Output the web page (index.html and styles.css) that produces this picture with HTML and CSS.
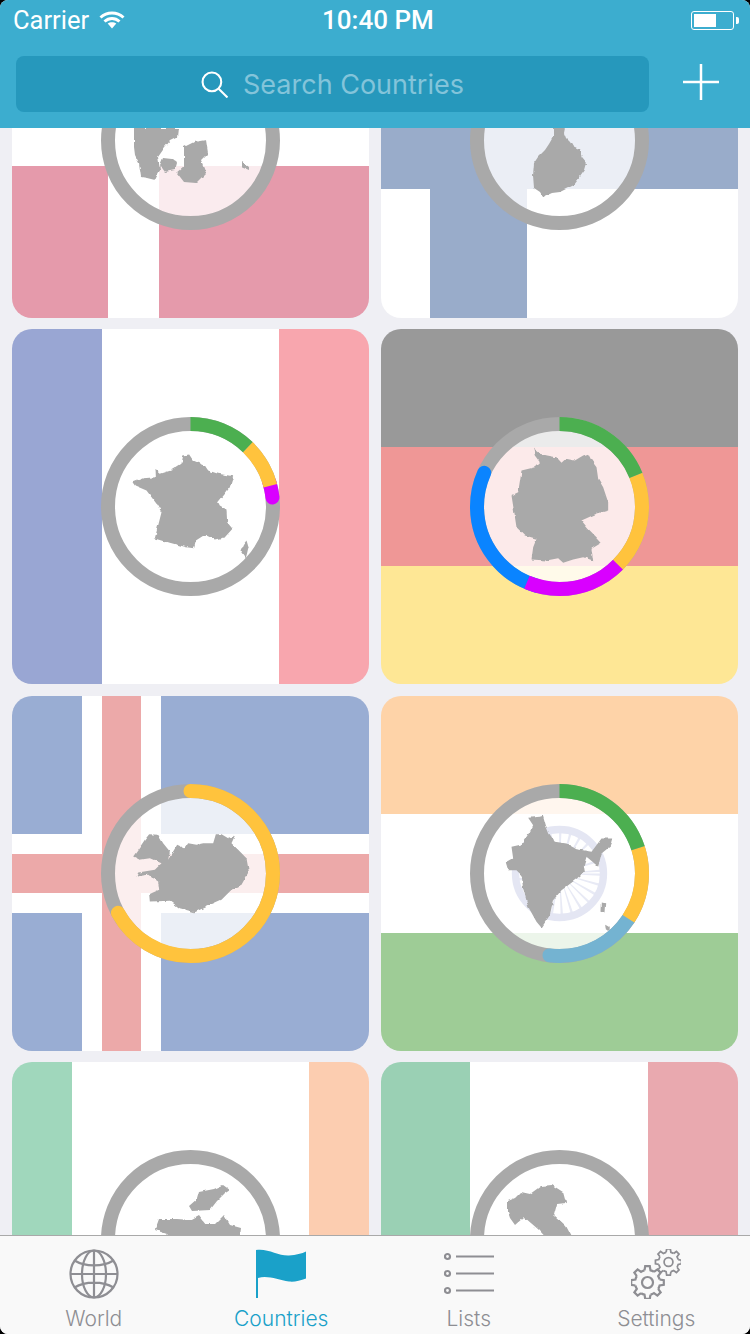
FILE: index.html
```html
<!DOCTYPE html>
<html lang="en">
<head>
    <meta charset="UTF-8">
    <title>Countries</title>
    <link rel="stylesheet" href="styles.css">
</head>
<body>
<svg class="defs" width="0" height="0">
    <!-- roughens the country outlines so they read as coastlines -->
    <filter id="coast" color-interpolation-filters="sRGB">
        <feTurbulence type="fractalNoise" baseFrequency=".05" numOctaves="2" seed="4" />
        <feDisplacementMap in="SourceGraphic" scale="10" xChannelSelector="R" yChannelSelector="G" />
    </filter>
</svg>
<div class="screen">
    <header class="top">
        <div class="status">
            <div class="status-left">
                <span>Carrier</span>
                <svg class="wifi" viewBox="0 0 26 18">
                    <path d="M1.5 6.5C8 .5 18 .5 24.500 6.500" />
                    <path d="M5.500 10.500C10 6.500 16 6.500 20.500 10.500" />
                    <path class="wifi-dot" d="M8.700 12.500C11 10.800 15 10.800 17.300 12.500L13 17.500Z" />
                </svg>
            </div>
            <span class="time">10:40 PM</span>
            <div class="battery"><div class="battery-body"><div class="battery-level"></div></div><div class="battery-nub"></div></div>
        </div>
        <div class="search-row">
            <div class="search">
                <svg class="search-icon" viewBox="0 0 26 26">
                    <circle cx="10.500" cy="10.500" r="9" />
                    <path d="M17 17L25.500 25.500" />
                </svg>
                <span>Search Countries</span>
            </div>
            <div class="add">
                <svg viewBox="0 0 36 36"><path d="M18 0V36M0 18H36" /></svg>
            </div>
        </div>
    </header>

    <main class="list">
        <div class="grid">
            <div class="card flag-dk">
                <svg class="ring" viewBox="0 0 537 537">
                    <circle class="disc" cx="268.500" cy="268.500" r="230" />
                    <g class="map"><g transform="scale(3) translate(-101 -51)">
                        <path d="M134 128L179 128L178 137L170 141L165 147L158 157L160 170L155 180L147 178L141 177L139 163L135 155L134 147Z" />
                        <path d="M163 158L172 159L177 163L175 170L165 172L160 165Z" />
                        <path d="M184 147L194 142L206 140L208 153L201 160L206 173L196 183L184 182L177 173L184 167L184 157Z" />
                        <path d="M242 162L249 167L249 170L242 167Z" />
                    </g></g>
                    <g class="arcs">
                        <circle class="track" cx="268.500" cy="268.500" r="247.500" pathLength="100" />
                    </g>
                </svg>
            </div>
            <div class="card flag-fi">
                <svg class="ring" viewBox="0 0 537 537">
                    <circle class="disc" cx="268.500" cy="268.500" r="230" />
                    <g class="map"><g transform="scale(3) translate(-470 -51)">
                        <path d="M553 128L565 128L564 133L566 138L570 142L573 147L579 150L582 157L587 163L585 170L580 177L574 185L568 188L560 192L552 193L543 197L540 192L534 188L533 175L534 163L538 157L545 150L549 144L553 137Z" />
                    </g></g>
                    <g class="arcs">
                        <circle class="track" cx="268.500" cy="268.500" r="247.500" pathLength="100" />
                    </g>
                </svg>
            </div>

            <div class="card flag-fr">
                <svg class="ring" viewBox="0 0 537 537">
                    <circle class="disc" cx="268.500" cy="268.500" r="230" />
                    <g class="map"><g transform="translate(-33.500 -34.500)">
                        <path d="M128 230L160 218L198 215L197 190L212 205L243 195L275 175L280 150L298 147L310 165L345 180L355 195L385 205L430 212L420 245L408 262L385 290L390 300L410 312L412 350L428 370L405 395L375 402L345 388L318 405L312 428L290 425L240 412L195 398L205 360L215 320L200 295L170 255L135 240Z" />
                        <path d="M470 405L476 425L468 458L452 435L460 418Z" />
                    </g></g>
                    <g class="arcs">
                        <circle class="track" cx="268.500" cy="268.500" r="247.500" pathLength="100" />
                        <circle class="arc purple cap" cx="268.500" cy="268.500" r="247.500" pathLength="100" stroke-dasharray="3 97" stroke-dashoffset="-20.200" />
                        <circle class="arc yellow" cx="268.500" cy="268.500" r="247.500" pathLength="100" stroke-dasharray="8.700 91.300" stroke-dashoffset="-12.200" />
                        <circle class="arc green" cx="268.500" cy="268.500" r="247.500" pathLength="100" stroke-dasharray="12.200 87.800" />
                    </g>
                </svg>
            </div>
            <div class="card flag-de">
                <svg class="ring" viewBox="0 0 537 537">
                    <circle class="disc" cx="268.500" cy="268.500" r="230" />
                    <g class="map"><g transform="translate(-30.500 -34.500)">
                        <path d="M220 130L240 145L262 150L290 155L305 172L318 160L345 165L370 150L385 145L395 165L410 185L415 220L430 245L445 290L445 315L410 325L365 345L385 370L410 395L425 412L395 430L400 465L370 455L340 462L310 472L295 458L260 465L215 462L220 425L230 400L195 390L170 365L163 320L155 270L175 260L185 195L225 185L240 170L225 150Z" />
                    </g></g>
                    <g class="arcs">
                        <circle class="track" cx="268.500" cy="268.500" r="247.500" pathLength="100" />
                        <circle class="arc blue cap" cx="268.500" cy="268.500" r="247.500" pathLength="100" stroke-dasharray="27.200 72.800" stroke-dashoffset="-54.400" />
                        <circle class="arc purple" cx="268.500" cy="268.500" r="247.500" pathLength="100" stroke-dasharray="19 81" stroke-dashoffset="-37.400" />
                        <circle class="arc yellow" cx="268.500" cy="268.500" r="247.500" pathLength="100" stroke-dasharray="18.600 81.400" stroke-dashoffset="-18.800" />
                        <circle class="arc green" cx="268.500" cy="268.500" r="247.500" pathLength="100" stroke-dasharray="18.800 81.200" />
                    </g>
                </svg>
            </div>

            <div class="card flag-is">
                <svg class="ring" viewBox="0 0 537 537">
                    <circle class="disc" cx="268.500" cy="268.500" r="230" />
                    <g class="map"><g transform="translate(-33.500 -27.500)">
                        <path d="M130 245L155 210L165 195L178 178L205 180L220 205L240 230L235 255L262 210L285 220L295 205L320 210L340 205L370 205L378 178L395 178L415 190L435 183L425 205L445 225L470 250L477 290L455 330L425 345L395 375L350 395L315 412L270 400L240 378L180 380L178 358L208 345L205 320L175 300L140 305L145 293L195 285L215 265L180 250L150 255Z" />
                    </g></g>
                    <g class="arcs">
                        <circle class="track" cx="268.500" cy="268.500" r="247.500" pathLength="100" />
                        <circle class="arc yellow cap" cx="268.500" cy="268.500" r="247.500" pathLength="100" stroke-dasharray="67 33" />
                    </g>
                </svg>
            </div>
            <div class="card flag-in">
                <svg class="ring" viewBox="0 0 537 537">
                    <circle class="disc" cx="268.500" cy="268.500" r="230" />
                    <circle class="chakra-spokes" cx="268.500" cy="268.500" r="85" />
                    <circle class="chakra" cx="268.500" cy="268.500" r="132" />
                    <g class="map"><g transform="translate(-30.500 -26.500)">
                        <path d="M205 128L240 125L250 122L258 150L268 175L285 200L320 205L350 222L370 225L395 230L425 190L460 190L455 210L425 235L415 275L398 260L380 245L372 272L375 290L345 315L305 345L280 375L270 420L245 458L230 440L205 395L190 340L185 300L170 285L145 285L138 262L160 250L155 215L185 208L210 170L220 150Z" />
                        <path d="M426 382L436 384L434 412L425 410Z" />
                        <path d="M436 446L447 452L446 468L438 462Z" />
                    </g></g>
                    <g class="arcs">
                        <circle class="track" cx="268.500" cy="268.500" r="247.500" pathLength="100" />
                        <circle class="arc sky cap" cx="268.500" cy="268.500" r="247.500" pathLength="100" stroke-dasharray="17.700 82.300" stroke-dashoffset="-34.200" />
                        <circle class="arc yellow" cx="268.500" cy="268.500" r="247.500" pathLength="100" stroke-dasharray="14.200 85.800" stroke-dashoffset="-20" />
                        <circle class="arc green" cx="268.500" cy="268.500" r="247.500" pathLength="100" stroke-dasharray="20 80" />
                    </g>
                </svg>
            </div>

            <div class="card flag-ie">
                <svg class="ring" viewBox="0 0 537 537">
                    <circle class="disc" cx="268.500" cy="268.500" r="230" />
                    <g class="map"><g transform="scale(3) translate(-101 -1150)">
                        <path d="M223 1185L230 1190L224 1194L217 1201L210 1210L192 1211L189 1206L197 1199L199 1192L214 1189Z" />
                        <path d="M199 1215L206 1224L215 1224L224 1215L230 1225L241 1228L239 1245L239 1260L160 1260L154 1245L167 1234L155 1230L159 1219L177 1219L190 1220Z" />
                    </g></g>
                    <g class="arcs">
                        <circle class="track" cx="268.500" cy="268.500" r="247.500" pathLength="100" />
                    </g>
                </svg>
            </div>
            <div class="card flag-it">
                <svg class="ring" viewBox="0 0 537 537">
                    <circle class="disc" cx="268.500" cy="268.500" r="230" />
                    <g class="map"><g transform="scale(3) translate(-470 -1150)">
                        <path d="M508 1201L515 1198L521 1192L530 1194L541 1186L552 1185L563 1192L566 1203L557 1204L554 1215L566 1226L574 1241L579 1246L590 1260L570 1260L552 1244L539 1230L524 1217L515 1225L510 1218L508 1212Z" />
                    </g></g>
                    <g class="arcs">
                        <circle class="track" cx="268.500" cy="268.500" r="247.500" pathLength="100" />
                    </g>
                </svg>
            </div>
        </div>
    </main>

    <nav class="tabs">
        <div class="tab">
            <svg class="tab-icon" viewBox="0 0 50 50">
                <circle cx="25" cy="25" r="23.500" />
                <ellipse cx="25" cy="25" rx="12" ry="23.500" />
                <path d="M25 1.500V48.500M1.500 25H48.500M5.500 11.500C16 18 34 18 44.500 11.500M5.500 38.500C16 32 34 32 44.500 38.500" />
            </svg>
            <span>World</span>
        </div>
        <div class="tab active">
            <svg class="tab-icon" viewBox="0 0 50 50">
                <path class="solid" d="M0 1C12-1 22 7 33 6.500C40 6 46 4.500 50 2.500V29.500C44 32 38 33 33 32.500C22 31 12 26 2 29V49H0Z" />
            </svg>
            <span>Countries</span>
        </div>
        <div class="tab">
            <svg class="tab-icon" viewBox="0 0 50 50">
                <circle cx="3.500" cy="7.500" r="2.500" />
                <circle cx="3.500" cy="24.500" r="2.500" />
                <circle cx="3.500" cy="41.500" r="2.500" />
                <path d="M12 7.500H50M12 24.500H50M12 41.500H50" />
            </svg>
            <span>Lists</span>
        </div>
        <div class="tab">
            <svg class="tab-icon" viewBox="0 0 50 50">
                <defs>
                    <g id="gear">
                        <path id="tooth" d="M-3-12.100L-2.300-16.300H2.300L3-12.100A12.500 12.500 0 0 1 6.400-10.700" />
                        <use href="#tooth" transform="rotate(45)" />
                        <use href="#tooth" transform="rotate(90)" />
                        <use href="#tooth" transform="rotate(135)" />
                        <use href="#tooth" transform="rotate(180)" />
                        <use href="#tooth" transform="rotate(225)" />
                        <use href="#tooth" transform="rotate(270)" />
                        <use href="#tooth" transform="rotate(315)" />
                        <circle r="5.500" />
                    </g>
                </defs>
                <use href="#gear" transform="translate(16.500 33.500)" />
                <use href="#gear" transform="translate(37.500 13) scale(.8)" />
            </svg>
            <span>Settings</span>
        </div>
    </nav>
</div>
</body>
</html>
```

FILE: styles.css
```css
html, body {
    margin: 0;
    background: #000;
}

.defs {
    display: block;
    height: 0;
}

.screen {
    width: 750px;
    height: 1334px;
    display: flex;
    flex-direction: column;
    overflow: hidden;
    border-radius: 8px;
    background: #efeff4;
    font-family: 'Inter', 'Liberation Sans', sans-serif;
}

/* Header */
.top {
    background: #3cadcf;
    color: #fff;
    position: relative;
    z-index: 2;
}

.status {
    height: 40px;
    position: relative;
    display: flex;
    align-items: center;
    justify-content: space-between;
    padding: 0 11px 0 13px;
    font-family: 'Roboto', sans-serif;
    font-size: 25.5px;
}

.status-left {
    display: flex;
    align-items: center;
    gap: 10px;
}

.wifi {
    width: 26px;
    height: 18px;
    fill: none;
    stroke: #fff;
    stroke-width: 3;
}

.wifi-dot {
    fill: #fff;
    stroke: none;
}

.time {
    position: absolute;
    left: 322px;
    font-size: 26px;
    font-weight: 500;
}

.battery {
    display: flex;
    align-items: center;
    gap: 2px;
}

.battery-body {
    width: 43px;
    height: 19px;
    box-sizing: border-box;
    border: 1px solid #fff;
    border-radius: 3px;
    padding: 2px;
}

.battery-level {
    width: 22px;
    height: 100%;
    background: #fff;
}

.battery-nub {
    width: 3px;
    height: 7px;
    background: #fff;
    border-radius: 0 2px 2px 0;
}

.search-row {
    display: flex;
    align-items: stretch;
    padding: 16px 0 16px 16px;
}

.search {
    flex: 1;
    height: 56px;
    background: #2698bc;
    border-radius: 8px;
    display: flex;
    align-items: center;
    justify-content: center;
    gap: 15px;
    color: #83c4da;
    font-size: 27px;
}

.search-icon {
    width: 27px;
    height: 27px;
    fill: none;
    stroke: #fff;
    stroke-width: 2;
}

.add {
    width: 101px;
    box-sizing: border-box;
    padding-left: 3px;
    display: flex;
    align-items: center;
    justify-content: center;
}

.add svg {
    width: 36px;
    height: 36px;
    margin-top: -5px;
    stroke: #fff;
    stroke-width: 2.5;
}

/* Cards */
.list {
    flex: 1;
    overflow: hidden;
}

.grid {
    margin-top: -165.5px;
    padding: 0 12px;
    display: grid;
    grid-template-columns: 1fr 1fr;
    grid-auto-rows: 355px;
    row-gap: 11.5px;
    column-gap: 12px;
}

.card {
    border-radius: 20px;
    display: flex;
    align-items: center;
    justify-content: center;
    background-color: #fff;
    background-repeat: no-repeat;
}

.flag-dk {
    background-image:
        linear-gradient(90deg, transparent 96px, #fff 96px, #fff 147px, transparent 147px),
        linear-gradient(#e59aab 152px, #fff 152px, #fff 203px, #e59aab 203px);
}

.flag-fi {
    background-image:
        linear-gradient(90deg, transparent 49px, #99acca 49px, #99acca 146px, transparent 146px),
        linear-gradient(#fff 130px, #99acca 130px, #99acca 226px, #fff 226px);
}

.flag-fr {
    background-image: linear-gradient(90deg, #99a6d3 90px, #fff 90px, #fff 267px, #f8a6ae 267px);
}

.flag-de {
    background-image: linear-gradient(#999 118px, #ef9796 118px, #ef9796 237px, #fee795 237px);
}

.flag-is {
    background-image:
        linear-gradient(90deg, transparent 90px, #eca9a9 90px, #eca9a9 129px, transparent 129px),
        linear-gradient(transparent 158px, #eca9a9 158px, #eca9a9 197px, transparent 197px),
        linear-gradient(90deg, transparent 70px, #fff 70px, #fff 149px, transparent 149px),
        linear-gradient(#99add3 138px, #fff 138px, #fff 217px, #99add3 217px);
}

.flag-in {
    background-image: linear-gradient(#fed3a8 118px, #fff 118px, #fff 237px, #9ecc96 237px);
}

.flag-ie {
    background-image: linear-gradient(90deg, #a0d7bc 60px, #fff 60px, #fff 297px, #fccdb0 297px);
}

.flag-it {
    background-image: linear-gradient(90deg, #9ad0b4 89px, #fff 89px, #fff 267px, #e9a9af 267px);
}

/* Progress ring */
.ring {
    width: 179px;
    height: 179px;
    overflow: visible;
}

.disc {
    fill: #fff;
    fill-opacity: .8;
}

.map {
    fill: #a9a9a9;
    filter: url(#coast);
}

.chakra {
    fill: none;
    stroke: #e4e6f3;
    stroke-width: 22;
}

.chakra-spokes {
    fill: none;
    stroke: #e8eaf5;
    stroke-width: 100;
    stroke-dasharray: 5 16;
}

.arcs {
    transform: rotate(-90deg);
    transform-origin: 268.5px 268.5px;
}

.arcs circle {
    fill: none;
    stroke-width: 42;
}

.track { stroke: #a9a9a9; }
.green { stroke: #4caf50; }
.yellow { stroke: #ffc33d; }
.purple { stroke: #d900ff; }
.blue { stroke: #0a84ff; }
.sky { stroke: #74b3d1; }
.cap { stroke-linecap: round; }

/* Tab bar */
.tabs {
    height: 98px;
    flex: none;
    display: flex;
    background: #f9f9f9;
    border-top: 1px solid #a9a9a9;
    position: relative;
    z-index: 2;
}

.tab {
    flex: 1;
    display: flex;
    flex-direction: column;
    align-items: center;
    padding-top: 13px;
    gap: 7px;
    color: #8e8e93;
    font-size: 21px;
    font-weight: 300;
}

.tab-icon {
    width: 50px;
    height: 50px;
    fill: none;
    stroke: #8e8e93;
    stroke-width: 2.200;
}

.tab.active {
    color: #1aa1c9;
}

.solid {
    fill: #1aa1c9;
    stroke: none;
}
```
